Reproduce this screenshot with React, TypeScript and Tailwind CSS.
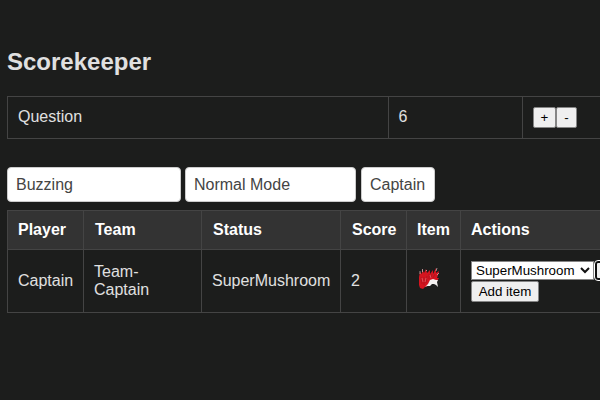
import type { ReactNode } from "react";

function Cell({ children, className = "pl-[10px]" }: { children: ReactNode; className?: string }) {
  return (
    <div className={`flex items-center border-l border-t border-[#444] ${className}`}>
      {children}
    </div>
  );
}

function SmallButton({ label, className }: { label: string; className: string }) {
  return (
    <button
      className={`flex h-[21px] shrink-0 items-center justify-center rounded-[2px] border border-[#858585] bg-[#efefef] text-[13.333px] leading-[15px] text-black ${className}`}
    >
      {label}
    </button>
  );
}

function Field({ value, className }: { value: string; className: string }) {
  return (
    <input
      readOnly
      defaultValue={value}
      className={`h-[35px] shrink-0 rounded-[4px] border border-[#ccc] bg-white px-2 text-[16px] text-[#444] outline-none ${className}`}
    />
  );
}

function ItemIcon() {
  return (
    <svg width="22" height="22" viewBox="0 0 22 22" className="shrink-0">
      <path d="M1 10 2 5l2 2 0-5 2 4 2-4 1 4 3-3 0 4 3-4 0 4 3-6 0 5 3-2-1 4-1 3 2 0-2 3-2 0-3-1-3 2-1 4-3 1-2 2-3-1-1-3z" fill="#d5141f" />
      <path d="M2 7V4M4.500 5V2M8 4l1-1M18 4l1-3M19 8l2-2" fill="none" stroke="#d8c0c1" strokeWidth=".7" />
      <path d="m10 17 2-4 3-1 3 1 2 0-1 2 1 5-2-2-2-1-2 0-2 2-3 0-2 1z" fill="#f4f1f1" />
      <path d="m3 10 1 7M6 10l0 8M9 9l-1 7M11 7l0 5M14 7l-1 4M17 7l-2 4" fill="none" stroke="#a9131d" strokeWidth=".7" />
      <path d="m4 11 1 4M8 11l-1 4M12 8l1 3" stroke="#e97880" strokeWidth=".6" />
    </svg>
  );
}

export default function App() {
  return (
    <main className="h-[400px] w-[600px] overflow-hidden bg-[#1c1d1c] pl-[7px] pt-[48px] font-['Liberation_Sans',Arial,sans-serif] text-[16px] leading-[18px] text-[#e0e0e0]">
      <h2 className="h-[48px] text-[24px] font-bold leading-[28px]">Scorekeeper</h2>

      <div className="grid h-[43px] w-[700px] grid-cols-[381px_134px_185px] border-b border-[#444]">
        <Cell className="pb-[2px] pl-[10px]">Question</Cell>
        <Cell className="pb-[2px] pl-[9.5px]">6</Cell>
        <Cell>
          <SmallButton label="+" className="w-[23px]" />
          <SmallButton label="-" className="w-[21px]" />
        </Cell>
      </div>

      <div className="mt-[28px] flex">
        <Field value="Buzzing" className="w-[174px]" />
        <Field value="Normal Mode" className="ml-[4px] w-[171px]" />
        <Field value="Captain" className="ml-[5px] w-[74px]" />
      </div>

      <div className="mt-[8px] grid w-[700px] grid-cols-[76px_118px_139px_66px_54px_247px] grid-rows-[39px_63px] border-b border-[#444]">
        <Cell className="bg-[#333] pl-[10px] font-bold text-white">Player</Cell>
        <Cell className="bg-[#333] pl-[11px] font-bold text-white">Team</Cell>
        <Cell className="bg-[#333] pl-[11px] font-bold text-white">Status</Cell>
        <Cell className="bg-[#333] pl-[11px] font-bold text-white">Score</Cell>
        <Cell className="bg-[#333] pl-[10px] font-bold text-white">Item</Cell>
        <Cell className="bg-[#333] pl-[10px] font-bold text-white">Actions</Cell>
        <Cell>Captain</Cell>
        <Cell>Team-<br />Captain</Cell>
        <Cell>SuperMushroom</Cell>
        <Cell>2</Cell>
        <Cell className="pb-[6px] pl-[11px]"><ItemIcon /></Cell>
        <Cell>
          <div>
            <div className="flex">
              <div className="flex h-[19px] w-[123px] shrink-0 items-center border border-[#858585] bg-white pl-[4px] text-[13.333px] leading-[15px] text-black">
                SuperMushroom
                <svg width="10" height="8" viewBox="0 0 10 8" className="ml-[5px] shrink-0">
                  <path d="m1 2 4 4 4-4" fill="none" stroke="#111" strokeWidth="2" />
                </svg>
              </div>
              <button className="ml-[1px] h-[19px] w-[40px] shrink-0 rounded-[3px] border-2 border-[#101010] bg-[#efefef] outline outline-1 outline-white" />
            </div>
            <SmallButton label="Add item" className="mt-px w-[68px]" />
          </div>
        </Cell>
      </div>
    </main>
  );
}
